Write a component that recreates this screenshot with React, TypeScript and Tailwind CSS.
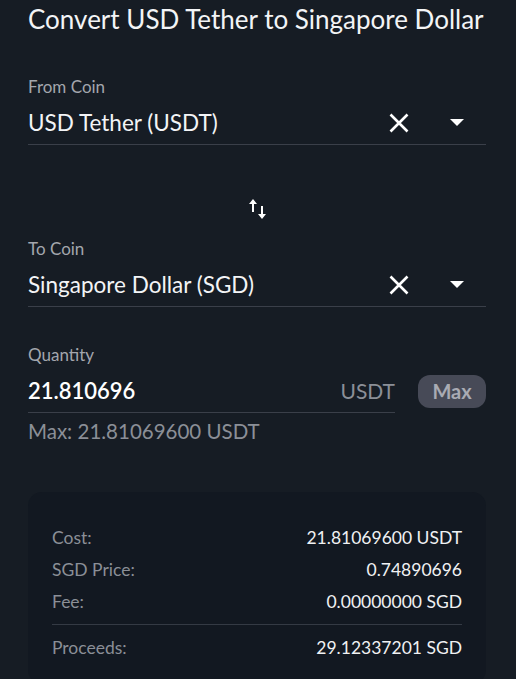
function CoinSelect({ label, value }: { label: string; value: string }) {
  return (
    <div>
      <div className="text-[17px] text-[#a3a6ad] leading-5">{label}</div>
      <div className="flex items-center h-[44px] mt-[4px] border-b border-[#3a3f49]">
        <div className="flex-1 text-[22.5px] text-[#f3f4f6]">{value}</div>
        <svg width="20" height="20" viewBox="0 0 20 20" className="mr-[41px]">
          <path d="M1.5 1.5 L18.5 18.5 M18.5 1.5 L1.5 18.5" stroke="#fff" strokeWidth="2.6" />
        </svg>
        <svg width="14" height="8" viewBox="0 0 14 8" className="mr-[22px]">
          <path d="M0 0h14L7 7z" fill="#fff" />
        </svg>
      </div>
    </div>
  );
}

function Row({ label, value }: { label: string; value: string }) {
  return (
    <div className="flex justify-between items-center h-[32px] text-[17.5px]">
      <span className="text-[#8b8f97]">{label}</span>
      <span className="text-[#f0f1f3]">{value}</span>
    </div>
  );
}

export default function App() {
  return (
    <main
      className="min-h-screen bg-[#161c24] pl-[28px] pr-[30px] pt-[2px] overflow-hidden"
      style={{ fontFamily: "Lato, 'Open Sans', sans-serif" }}
    >
      <h1 className="text-[26px] text-[#f3f4f6] leading-[34px] whitespace-nowrap">
        Convert USD Tether to Singapore Dollar
      </h1>

      <div className="mt-[41px]">
        <CoinSelect label="From Coin" value="USD Tether (USDT)" />
      </div>

      <div className="flex justify-center mt-[52px] pl-[2px]">
        <svg width="20" height="24" viewBox="0 0 20 24">
          <path d="M5 2 L1 7 H4 V15 H6 V7 H9 Z" fill="#fff" />
          <path d="M14 22 L10 17 H13 V9 H15 V17 H18 Z" fill="#fff" />
        </svg>
      </div>

      <div className="mt-[18px]">
        <CoinSelect label="To Coin" value="Singapore Dollar (SGD)" />
      </div>

      <div className="mt-[38px]">
        <div className="text-[17px] text-[#a3a6ad] leading-5">Quantity</div>
        <div className="flex items-center mt-[4px]">
          <div className="flex-1 flex items-center h-[44px] border-b border-[#3a3f49]">
            <span className="flex-1 text-[22px] font-semibold text-white">21.810696</span>
            <span className="text-[21px] text-[#8b8f97]">USDT</span>
          </div>
          <button className="ml-[23px] w-[68px] h-[33px] rounded-[12px] bg-[#474a57] text-[#a9abb3] text-[20px] font-bold">
            Max
          </button>
        </div>
        <div className="text-[20.5px] leading-[28px] text-[#8b8f97] mt-[4px]">Max: 21.81069600 USDT</div>
      </div>

      <div className="mt-[47px] bg-[#121821] rounded-[14px] px-[24px] pt-[30px] pb-[20px]">
        <Row label="Cost:" value="21.81069600 USDT" />
        <Row label="SGD Price:" value="0.74890696" />
        <Row label="Fee:" value="0.00000000 SGD" />
        <div className="border-t border-[#343a44] mt-[6px] mb-[7px]" />
        <Row label="Proceeds:" value="29.12337201 SGD" />
      </div>
    </main>
  );
}
